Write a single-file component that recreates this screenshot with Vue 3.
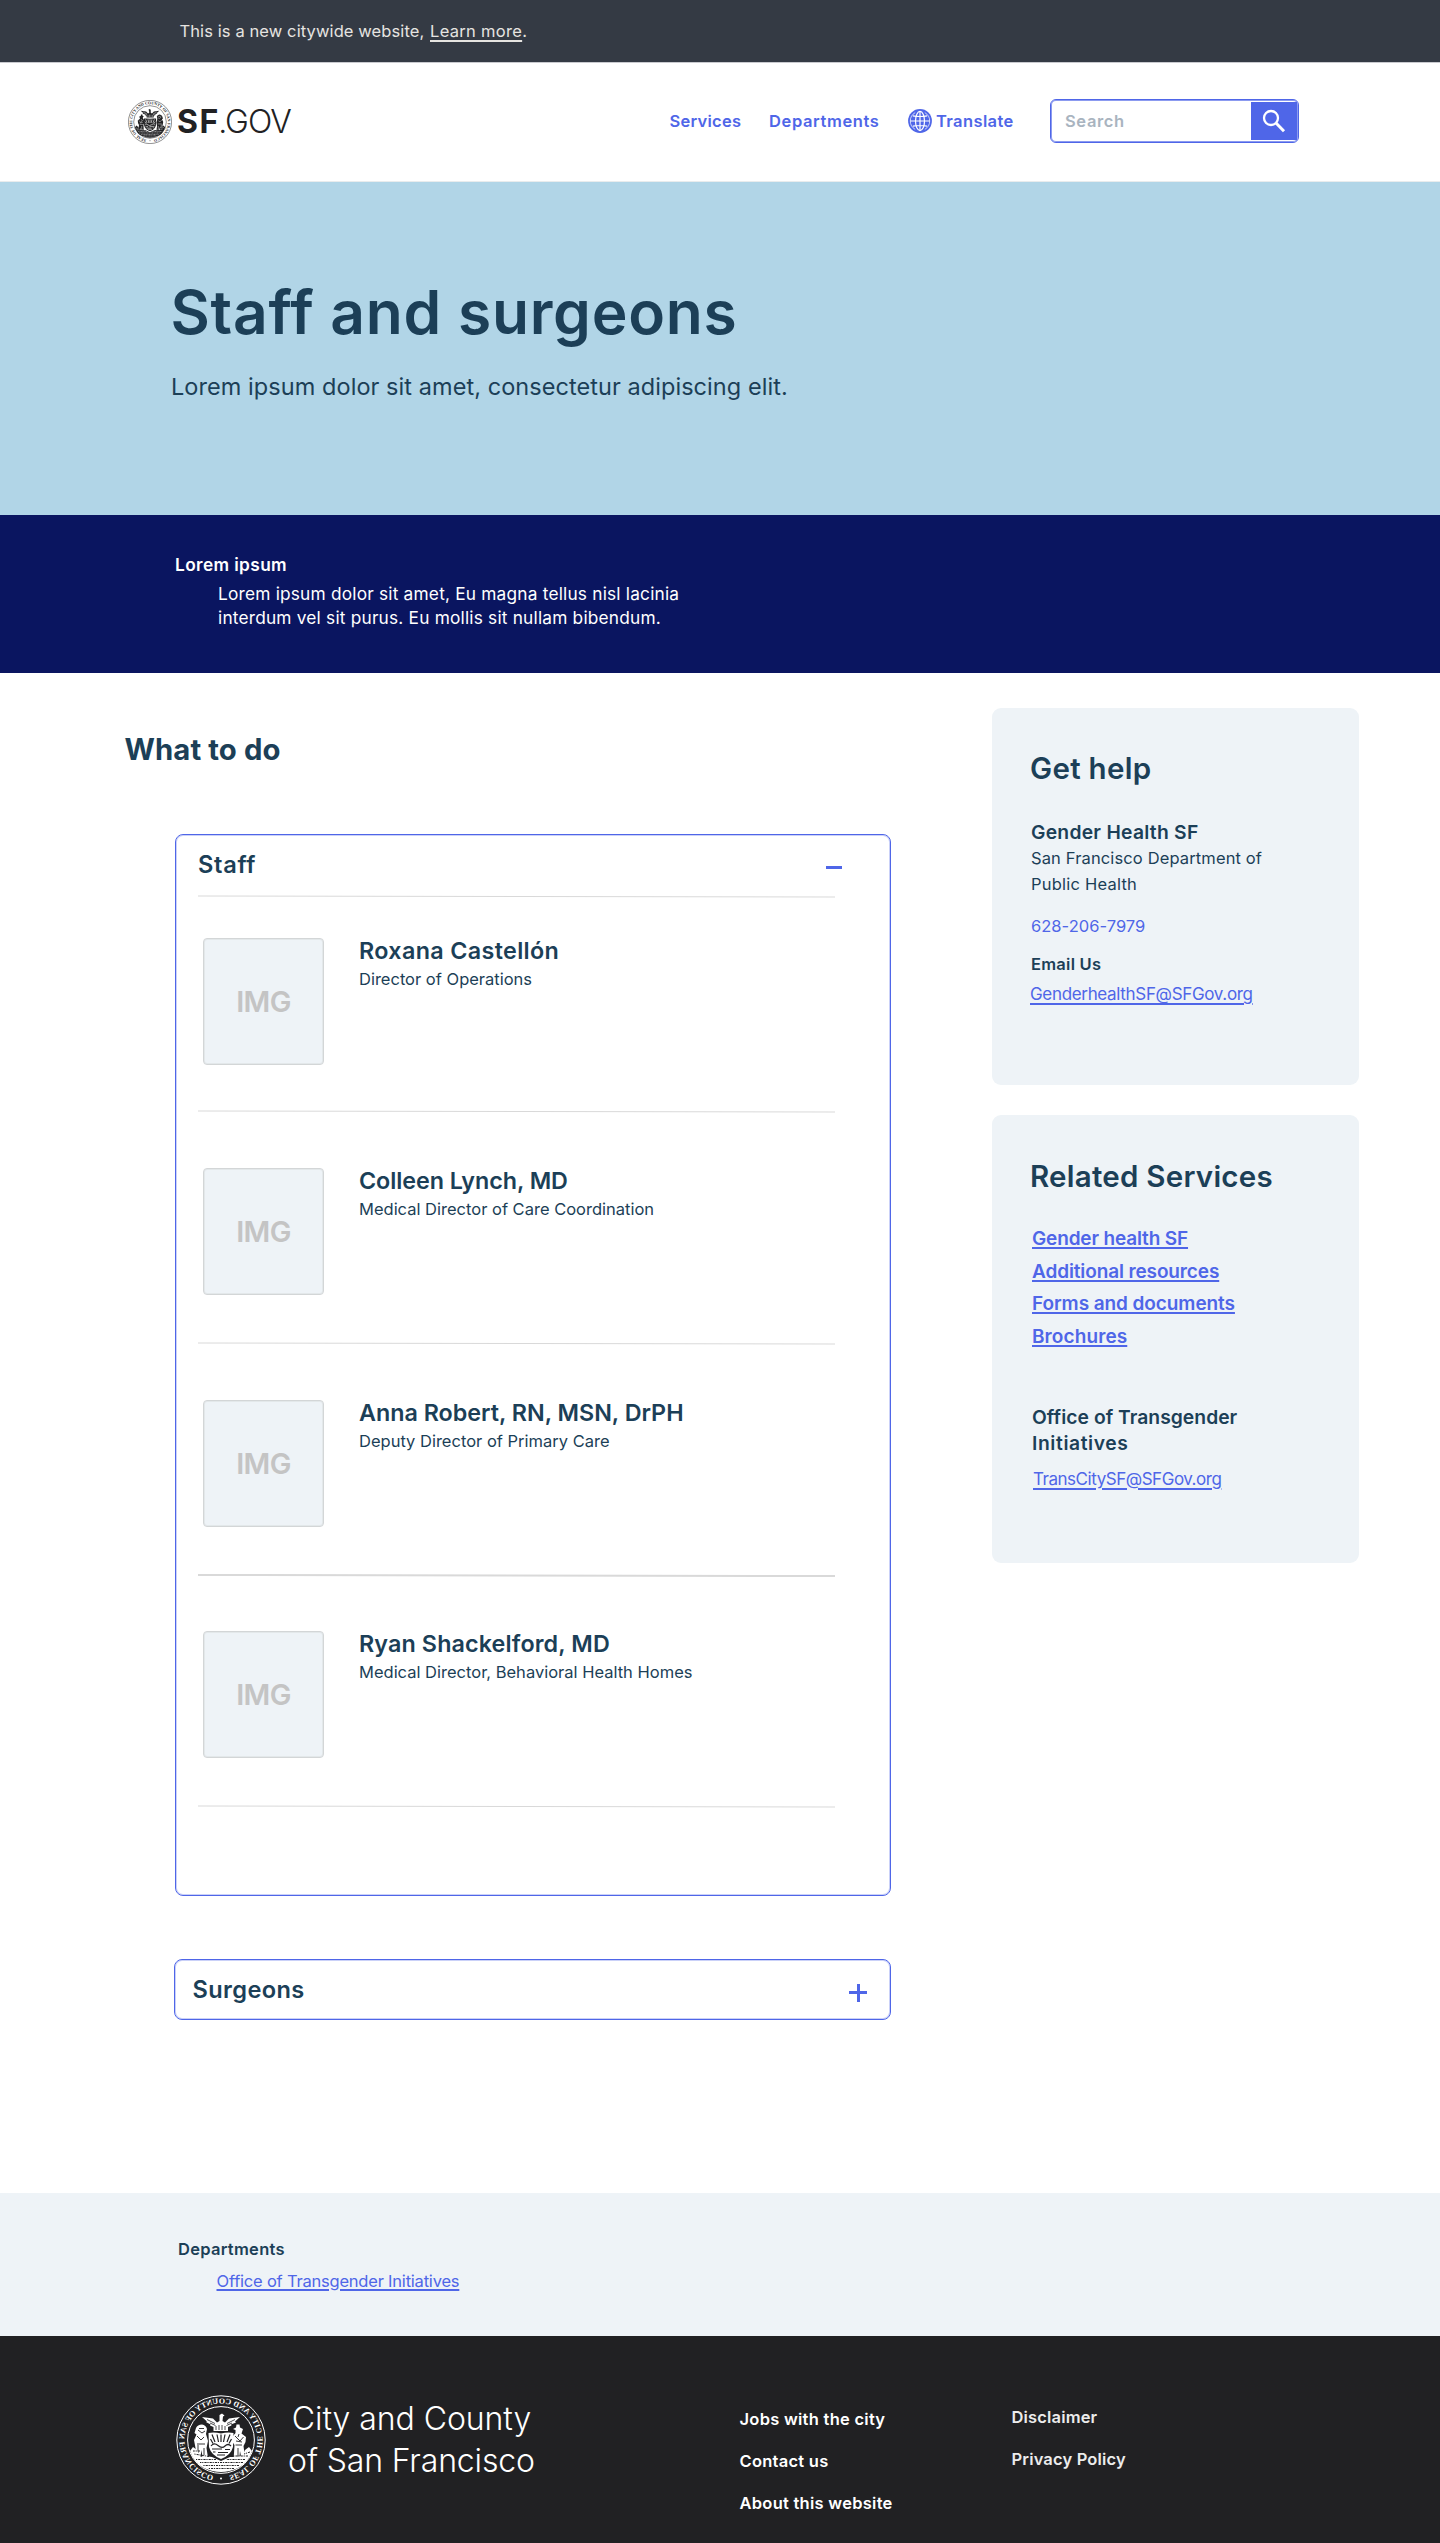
<script setup>
const nav = [
  { label: 'Services', cls: 'nav-services' },
  { label: 'Departments', cls: 'nav-departments' }
]

const staff = [
  { name: 'Roxana Castellón', role: 'Director of Operations', tracking: '0.36px' },
  { name: 'Colleen Lynch, MD', role: 'Medical Director of Care Coordination', tracking: '-0.05px' },
  { name: 'Anna Robert, RN, MSN, DrPH', role: 'Deputy Director of Primary Care', tracking: '0px' },
  { name: 'Ryan Shackelford, MD', role: 'Medical Director, Behavioral Health Homes', tracking: '0.13px' }
]

const related = [
  { label: 'Gender health SF', tracking: '-0.15px' },
  { label: 'Additional resources', tracking: '-0.12px' },
  { label: 'Forms and documents', tracking: '-0.08px' },
  { label: 'Brochures', tracking: '0.1px' }
]

const cityLinks = ['Jobs with the city', 'Contact us', 'About this website']
const legalLinks = ['Disclaimer', 'Privacy Policy']
</script>

<template>
  <div class="page">
    <div class="topbar">
      <span class="notice">This is a new citywide website,</span>
      <a class="learn">Learn more</a><span>.</span>
    </div>

    <header class="header">
      <div class="logo">
        <svg class="logo-seal" width="44" height="44" viewBox="0 0 90 90">
          <g id="seal">
            <path id="seal-ring" d="M45 81.4A36.400 36.400 0 0 1 45 8.600A36.400 36.400 0 0 1 45 81.400" fill="none" />
            <circle cx="45" cy="45" r="44.200" fill="none" stroke="currentColor" stroke-width="1" />
            <circle cx="45" cy="45" r="33.400" fill="none" stroke="currentColor" stroke-width="1" />
            <text font-family="Liberation Serif, serif" font-weight="700" font-size="8" fill="currentColor">
              <textPath href="#seal-ring" startOffset="8" textLength="213">SEAL OF THE CITY AND COUNTY OF SAN FRANCISCO</textPath>
            </text>
            <circle cx="45" cy="83.400" r="1" fill="currentColor" />
            <!-- phoenix -->
            <path fill="currentColor" d="M26 22L37 23.500L41 27.500L43.500 26L43 21.500L41.500 20.500L44 18.500L46.500 20L46.500 26L49 27.500L53 23.500L64 22L59 26.500L60 27L55.500 29.500L56 30.500L52.500 32L52.500 36H38V32L34.500 30.500L35 29.500L30 27.500L31 26.500Z" />
            <path fill="none" stroke="var(--seal-bg)" stroke-width=".8" d="M31 24.500L39 28.500M59 24.500L51 28.500M34 28L39.500 30.500M56 28L50.500 30.500M41 35V31M44 35V30M47 35V30M50 35V31" />
            <!-- shield -->
            <path fill="currentColor" d="M32.500 38Q38.500 37 45 38.500Q51.500 37 57.500 38L57 52Q55 60 45 64Q35 60 33 52Z" />
            <path fill="none" stroke="var(--seal-bg)" stroke-width="1.200" d="M36 39.500L39 47M41 39.500L42.500 47M45 39.500V47M49 39.500L47.500 47M54 39.500L51 47M34.500 44L37 48.500M55.500 44L53 48.500M35 51Q38 48 41 51T48 50.500T55 51M36 54.500H41M44 54H54M38 57.500H48M50.500 57H53M41 60H49" />
            <!-- miner -->
            <path fill="currentColor" d="M23 34L26 32.500L26.500 29.500L29.500 29.500L30 32.500L33 34L30.500 35L30.500 38L33 41L33.500 47L31.500 50L32.500 66H27L26 56L24 66H20.500L22.500 51L20.500 47L20 42L24.500 38.500Z" />
            <path fill="none" stroke="var(--seal-bg)" stroke-width=".9" d="M22.500 42L26 46L31 41M24 50H30.500M28 53V62M27 39L28 42M24 47L30 46" />
            <!-- sailor -->
            <path fill="currentColor" d="M59 34Q60 30 64 29.500Q68.500 29.500 70 33L71.500 38L69.500 39.500L72 45L70.500 53L69.500 66H66L64.500 55L63 66H57.500L59.500 53L58 46L60 39Z" />
            <path fill="none" stroke="var(--seal-bg)" stroke-width=".9" d="M62 33.500H67M61 36L64 38L68 35M62 42L65 45L69 41M61 49H69M62 53V60M68 50V58" />
            <!-- ground, rope, plough and bales -->
            <path fill="currentColor" d="M14 56L17 52L21 55L23 60L30 62L36 62L45 66L54 62L61 61L66 62L69 55L73 52L76 56Q72 68 62 73Q45 81 28 73Q18 68 14 56Z" />
            <path fill="none" stroke="var(--seal-bg)" stroke-width="1" stroke-dasharray="2.200 1 1.200 .8" d="M16 57L22 59M18 61H34M57 61.500L72 59M21 64.500H40M50 64.500H70M23 67.500H66M27 70.500H63M32 73.500H58M66 56L73 56" />
          </g>
        </svg>
        <span class="logo-sf">SF</span><span class="logo-gov">.GOV</span>
      </div>
      <a v-for="n in nav" :key="n.label" class="nav-link" :class="n.cls">{{ n.label }}</a>
      <a class="nav-link nav-translate">
        <svg width="24" height="24" viewBox="0 0 24 24">
          <circle cx="12" cy="12" r="11.900" fill="#4f66e8" />
          <g fill="none" stroke="#fff" stroke-width="1.200">
            <ellipse cx="12" cy="12" rx="4.500" ry="9.600" />
            <path d="M12 2.200V21.800M2.200 12H21.800M4.800 6.800Q12 8.200 19.200 6.800M4.800 17.200Q12 15.800 19.200 17.200" />
            <path d="M7.200 3.600Q2.300 6.500 2.300 12T7.200 20.400M16.800 3.600Q21.700 6.500 21.700 12T16.800 20.400" stroke-width=".7" />
          </g>
        </svg>
        <span>Translate</span>
      </a>
      <div class="search">
        <span class="search-hint">Search</span>
        <span class="search-button">
          <svg width="24" height="24" viewBox="0 0 24 24" fill="none" stroke="#fff">
            <circle cx="9" cy="9" r="7" stroke-width="2.300" />
            <path d="M14 14L22 22.300" stroke-width="3" />
          </svg>
        </span>
      </div>
    </header>

    <section class="hero">
      <h1>Staff and surgeons</h1>
      <p>Lorem ipsum dolor sit amet, consectetur adipiscing elit.</p>
    </section>

    <section class="intro">
      <h4>Lorem ipsum</h4>
      <p>Lorem ipsum dolor sit amet, Eu magna tellus nisl lacinia<br />interdum vel sit purus. Eu mollis sit nullam bibendum.</p>
    </section>

    <main class="main">
      <div class="content">
        <h2>What to do</h2>

        <section class="panel">
          <div class="panel-head">
            <h3>Staff</h3>
            <span class="minus"></span>
          </div>
          <svg class="rule" width="637" height="4"><path d="M0 1L637 2" /></svg>
          <template v-for="(p, i) in staff" :key="p.name">
            <div class="person">
              <div class="photo">IMG</div>
              <div class="bio">
                <div class="name" :style="{ letterSpacing: p.tracking }">{{ p.name }}</div>
                <div class="role">{{ p.role }}</div>
              </div>
            </div>
            <svg class="rule" :class="{ thick: i === 2 }" width="637" height="4"><path d="M0 1L637 2" /></svg>
          </template>
        </section>

        <section class="panel collapsed">
          <h3>Surgeons</h3>
          <span class="plus"></span>
        </section>
      </div>

      <aside class="aside">
        <section class="card help">
          <h2>Get help</h2>
          <h3>Gender Health SF</h3>
          <p>San Francisco Department of<br /><span class="public">Public Health</span></p>
          <p class="phone">628-206-7979</p>
          <h4>Email Us</h4>
          <a class="mail">GenderhealthSF@SFGov.org</a>
        </section>

        <section class="card services">
          <h2>Related Services</h2>
          <ul>
            <li v-for="r in related" :key="r.label">
              <a :style="{ letterSpacing: r.tracking }">{{ r.label }}</a>
            </li>
          </ul>
          <h3>Office of Transgender<br /><span class="initiatives">Initiatives</span></h3>
          <a class="mail trans">TransCitySF@SFGov.org</a>
        </section>
      </aside>
    </main>

    <section class="departments">
      <h4>Departments</h4>
      <a>Office of Transgender Initiatives</a>
    </section>

    <footer class="footer">
      <svg class="footer-seal" width="90" height="90" viewBox="0 0 90 90"><use href="#seal" /></svg>
      <div class="footer-title">City and County<br /><span>of San Francisco</span></div>
      <div class="footer-col city">
        <a v-for="l in cityLinks" :key="l">{{ l }}</a>
      </div>
      <div class="footer-col legal">
        <a v-for="l in legalLinks" :key="l">{{ l }}</a>
      </div>
    </footer>
  </div>
</template>

<style>
body {
  margin: 0;
  background: #fff;
}
</style>

<style scoped>
.page {
  width: 1440px;
  height: 2543px;
  overflow: hidden;
  font-family: Inter, "Liberation Sans", sans-serif;
  font-size: 16.5px;
  color: #1c3f57;
}
h1, h2, h3, h4, p, ul {
  margin: 0;
  padding: 0;
  font-weight: 600;
}
p {
  font-weight: 400;
}
ul {
  list-style: none;
}
.topbar {
  box-sizing: border-box;
  height: 62px;
  padding-left: 179.500px;
  display: flex;
  align-items: center;
  background: #343a44;
  color: #e6e4e1;
}
.notice {
  width: 250.500px;
  letter-spacing: 0.1px;
  white-space: nowrap;
}
.learn {
  letter-spacing: 0.3px;
  text-decoration: underline;
  text-decoration-thickness: 1.5px;
  text-underline-offset: 3px;
  text-decoration-skip-ink: none;
}

.header {
  box-sizing: border-box;
  height: 120px;
  padding: 0 0 2px 128px;
  display: flex;
  align-items: center;
  border-top: 1px solid #c9cacf;
  border-bottom: 1px solid #e9eced;
}
.logo {
  width: 541.500px;
  display: flex;
  align-items: center;
  color: #212123;
  font-size: 32px;
}
.logo-seal {
  --seal-bg: #fff;
  margin: 2px 5px 0 0;
}
.logo-sf {
  font-weight: 700;
  letter-spacing: 1.5px;
}
.logo-gov {
  font-weight: 300;
  letter-spacing: -0.88px;
  margin-left: -1.500px;
}
.nav-link {
  color: #4f66e8;
  font-weight: 600;
  white-space: nowrap;
}
.nav-services {
  width: 99.500px;
  letter-spacing: 0.26px;
}
.nav-departments {
  width: 139px;
  letter-spacing: 0.62px;
}
.nav-translate {
  width: 142px;
  display: flex;
  align-items: center;
  gap: 4px;
  letter-spacing: 0.38px;
}
.search {
  box-sizing: border-box;
  width: 249px;
  height: 44px;
  border: 1px solid #4f66e8;
  box-shadow: inset 0 0 0 1px rgba(79, 102, 232, 0.65);
  border-radius: 6px;
  display: flex;
  align-items: center;
  justify-content: space-between;
  padding: 0 1px 0 14px;
}
.search-hint {
  color: #a9b4bf;
  font-weight: 600;
  letter-spacing: 0.62px;
}
.search-button {
  width: 46px;
  height: 38px;
  display: flex;
  align-items: center;
  justify-content: center;
  background: #4f66e8;
}

.hero {
  box-sizing: border-box;
  height: 333px;
  padding: 100px 0 0 170.500px;
  background: #b1d5e7;
}
.hero h1 {
  font-size: 60.500px;
  line-height: 60px;
  letter-spacing: 0.72px;
}
.hero p {
  margin: 29.500px 0 0 0.500px;
  font-size: 23.500px;
  line-height: 30px;
  letter-spacing: 0.06px;
}
.intro {
  box-sizing: border-box;
  height: 158px;
  padding: 38px 0 0 175px;
  background: #0a1560;
  color: #fff;
  font-size: 17.300px;
  line-height: 24px;
}
.intro h4 {
  letter-spacing: 0.38px;
}
.intro p {
  margin: 5px 0 0 43px;
  letter-spacing: 0.2px;
}

.main {
  box-sizing: border-box;
  height: 1520px;
  padding-left: 125px;
  display: flex;
  gap: 101px;
}
.content {
  width: 766px;
}
.content > h2 {
  margin: 58.500px 0 0 -0.500px;
  font-size: 29.300px;
  line-height: 36px;
  font-weight: 750;
  letter-spacing: 0.1px;
}
.panel {
  box-sizing: border-box;
  width: 716px;
  height: 1062px;
  margin: 66.500px 0 0 50px;
  padding: 14.500px 0 0 22px;
  border: 1px solid #4f66e8;
  border-radius: 8px;
  box-shadow: inset 0 0 0 1px rgba(79, 102, 232, 0.3);
}
.panel h3 {
  font-size: 23.600px;
  line-height: 30px;
  letter-spacing: 0.7px;
}
.panel-head {
  height: 45.500px;
  display: flex;
  justify-content: space-between;
}
.minus {
  width: 16px;
  height: 3px;
  margin: 16px 48px 0 0;
  background: #4f66e8;
}
.rule {
  display: block;
  fill: none;
  stroke: #d9d9d9;
  stroke-width: 1;
}
.rule.thick {
  stroke-width: 2;
}
.person {
  box-sizing: border-box;
  height: 228px;
  padding: 53.500px 0 0 5px;
  display: flex;
}
.panel-head + .rule + .person {
  height: 211px;
  padding-top: 38.500px;
}
.thick + .person {
  height: 227px;
  padding-top: 52.500px;
}
.photo {
  box-sizing: border-box;
  width: 121px;
  height: 127px;
  border: 1px solid #d3d6d7;
  box-shadow: inset 0 0 0 1px rgba(211, 214, 215, 0.4);
  border-radius: 4px;
  background: #eef3f7;
  display: flex;
  align-items: center;
  justify-content: center;
  color: #c4c4c4;
  font-size: 29px;
  font-weight: 600;
  letter-spacing: -0.64px;
}
.bio {
  margin: -2px 0 0 35px;
}
.name {
  font-size: 23.300px;
  line-height: 30px;
  font-weight: 600;
}
.role {
  margin-top: 2.500px;
  line-height: 22px;
}
.panel.collapsed {
  width: 717px;
  height: 61px;
  margin: 63px 0 0 49px;
  padding: 0 23px 0 17.500px;
  display: flex;
  align-items: center;
  justify-content: space-between;
}
.collapsed h3 {
  letter-spacing: 0.38px;
}
.plus {
  width: 18px;
  height: 18px;
  margin-top: 6px;
  background:
    linear-gradient(#4f66e8, #4f66e8) center / 18px 3px no-repeat,
    linear-gradient(#4f66e8, #4f66e8) center / 3px 18px no-repeat;
}

.aside {
  width: 367px;
  padding-top: 35px;
}
.card {
  box-sizing: border-box;
  height: 377px;
  padding: 41.500px 0 0 39px;
  border-radius: 9px;
  background: #eef3f7;
}
.card h2 {
  margin-left: -1px;
  font-size: 29.500px;
  line-height: 36px;
  letter-spacing: 0.3px;
}
.card h3 {
  font-size: 19.300px;
  line-height: 26px;
}
.help h3 {
  margin-top: 33.500px;
  letter-spacing: 0.26px;
}
.help p {
  line-height: 26px;
  letter-spacing: 0.13px;
}
.public {
  letter-spacing: 0.22px;
}
.help .phone {
  margin-top: 16px;
  letter-spacing: 0.03px;
  color: #4f66e8;
}
.help h4 {
  margin-top: 12px;
  line-height: 26px;
  letter-spacing: 0.25px;
}
.mail {
  display: block;
  width: max-content;
  margin: 4px 0 0 -1px;
  font-size: 17px;
  line-height: 26px;
  letter-spacing: -0.33px;
  color: #4f66e8;
  text-decoration: underline;
  text-decoration-thickness: 1.500px;
  text-underline-offset: 2.500px;
}
.services {
  height: 448px;
  margin-top: 30px;
  padding: 42.500px 0 0 40px;
}
.services h2 {
  margin-left: -2px;
  letter-spacing: 0.24px;
}
.services ul {
  margin-top: 29.500px;
}
.services li {
  height: 32.700px;
  font-size: 19px;
  line-height: 32.700px;
  font-weight: 600;
  color: #4f66e8;
}
.services li a {
  text-decoration: underline;
  text-decoration-thickness: 1.500px;
  text-underline-offset: 2px;
}
.services h3 {
  margin-top: 50.400px;
  letter-spacing: 0.03px;
}
.initiatives {
  letter-spacing: 0.6px;
}
.mail.trans {
  margin: 9.600px 0 0 1px;
  letter-spacing: -0.47px;
}

.departments {
  box-sizing: border-box;
  height: 143px;
  padding: 44px 0 0 178px;
  background: #eef3f7;
  line-height: 24px;
}
.departments h4 {
  letter-spacing: 0.28px;
}
.departments a {
  display: block;
  width: max-content;
  margin: 8px 0 0 38.500px;
  letter-spacing: -0.21px;
  color: #4f66e8;
  text-decoration: underline;
  text-decoration-thickness: 1.500px;
  text-underline-offset: 2px;
}

.footer {
  box-sizing: border-box;
  height: 207px;
  padding-left: 176px;
  display: flex;
  background: #212123;
  color: #fff;
}
.footer-seal {
  --seal-bg: #212123;
  margin-top: 59px;
  transform: scaleX(-1);
}
.footer-title {
  width: 291px;
  margin-top: 62px;
  font-size: 32px;
  line-height: 42px;
  font-weight: 300;
  letter-spacing: -0.06px;
  text-align: center;
}
.footer-title span {
  letter-spacing: -0.14px;
}
.footer-col {
  display: flex;
  flex-direction: column;
  line-height: 42px;
  font-weight: 600;
  letter-spacing: 0.26px;
}
.city {
  width: 272px;
  margin: 62px 0 0 182.500px;
}
.legal {
  margin-top: 60px;
  letter-spacing: 0.16px;
  color: #ececec;
}
</style>
